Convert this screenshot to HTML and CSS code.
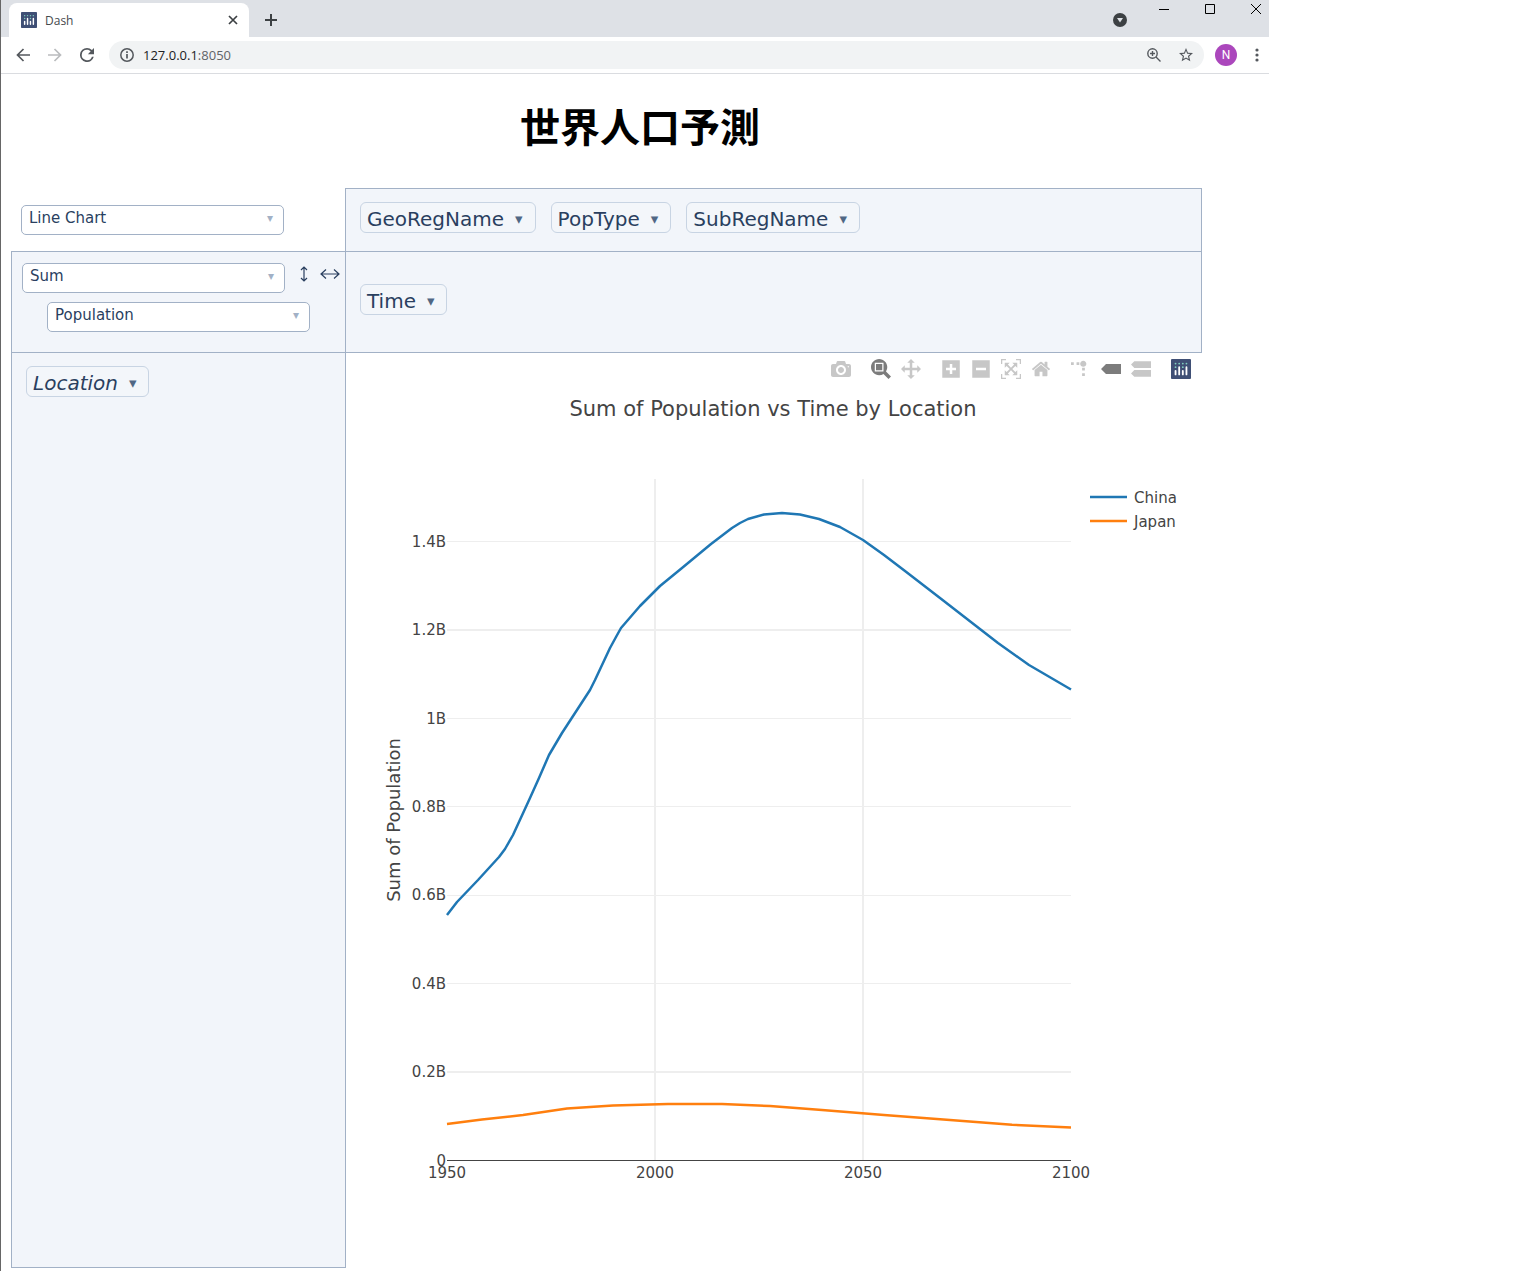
FILE: index.html
```html
<!DOCTYPE html>
<html lang="ja">
<head>
<meta charset="utf-8">
<title>Dash</title>
<link rel="stylesheet" href="styles.css">
</head>
<body>
<div class="browser">
  <header class="tabstrip">
    <div class="tab">
      <svg class="tab-logo" viewBox="0 0 132 132" aria-hidden="true"><use href="#plotly-logo"/></svg>
      <span class="tab-title">Dash</span>
      <button class="icon-btn" aria-label="Close tab"><svg width="10" height="10" viewBox="0 0 10 10"><path d="M1 1l8 8M9 1l-8 8" stroke="#3c4043" stroke-width="1.700"/></svg></button>
    </div>
    <button class="icon-btn new-tab" aria-label="New tab"><svg width="12" height="12" viewBox="0 0 12 12"><path d="M6 0v12M0 6h12" stroke="#3c4043" stroke-width="2"/></svg></button>
    <button class="icon-btn tab-search" aria-label="Search tabs"><svg width="14" height="14" viewBox="0 0 14 14"><circle cx="7" cy="7" r="7" fill="#3c4043"/><path d="M4 5h6L7 9.500z" fill="#dee1e6"/></svg></button>
    <div class="window-controls">
      <button class="icon-btn" aria-label="Minimize"><svg width="10" height="10" viewBox="0 0 10 10"><path d="M0 5.500h10" stroke="#000"/></svg></button>
      <button class="icon-btn" aria-label="Maximize"><svg width="10" height="10" viewBox="0 0 10 10"><path d="M.5.5h9v9h-9z" fill="none" stroke="#000"/></svg></button>
      <button class="icon-btn" aria-label="Close"><svg width="10" height="10" viewBox="0 0 10 10"><path d="M0 0l10 10M10 0L0 10" stroke="#000"/></svg></button>
    </div>
  </header>
  <div class="toolbar">
    <button class="icon-btn" aria-label="Back"><svg width="14" height="14" viewBox="0 0 14 14"><path d="M14 7H1.500M7.500 1L1.500 7l6 6" fill="none" stroke="#54585d" stroke-width="1.700"/></svg></button>
    <button class="icon-btn" aria-label="Forward"><svg width="14" height="14" viewBox="0 0 14 14"><path d="M0 7h12.500M6.500 1l6 6-6 6" fill="none" stroke="#babcbe" stroke-width="1.700"/></svg></button>
    <button class="icon-btn" aria-label="Reload"><svg width="14" height="14" viewBox="4 4 16 16"><path fill="#54585d" d="M17.650 6.350A7.960 7.960 0 0 0 12 4a8 8 0 1 0 7.730 10h-2.080A6 6 0 1 1 12 6c1.660 0 3.140.69 4.220 1.780L13 11h7V4z"/></svg></button>
    <div class="address">
      <svg width="14" height="14" viewBox="0 0 14 14" aria-hidden="true"><circle cx="7" cy="7" r="6.200" fill="none" stroke="#54585d" stroke-width="1.500"/><path d="M7 6v4.500M7 3.300v1.700" stroke="#54585d" stroke-width="1.700"/></svg>
      <span class="url">127.0.0.1<span class="port">:8050</span></span>
      <button class="icon-btn" aria-label="Zoom"><svg width="14" height="14" viewBox="0 0 14 14"><circle cx="5.500" cy="5.500" r="4.700" fill="none" stroke="#54585d" stroke-width="1.400"/><path d="M9 9l4.500 4.500M5.500 3v5M3 5.500h5" stroke="#54585d" stroke-width="1.400"/></svg></button>
      <button class="icon-btn" aria-label="Bookmark"><svg width="14" height="14" viewBox="2 2 20 20"><path fill="#54585d" d="M22 9.240l-7.190-.62L12 2 9.190 8.630 2 9.240l5.460 4.730L5.820 21 12 17.270 18.180 21l-1.630-7.030zM12 15.400l-3.760 2.270 1-4.280-3.320-2.880 4.380-.38L12 6.100l1.710 4.040 4.380.38-3.320 2.880 1 4.280z"/></svg></button>
    </div>
    <button class="avatar" aria-label="Profile N">N</button>
    <button class="icon-btn" aria-label="Menu"><svg width="4" height="14" viewBox="0 0 4 14"><g fill="#54585d"><circle cx="2" cy="2" r="1.600"/><circle cx="2" cy="7" r="1.600"/><circle cx="2" cy="12" r="1.600"/></g></svg></button>
  </div>

  <main class="page">
    <h1 class="title">世界人口予測</h1>
    <div class="pivot">
      <div class="cell-renderer">
        <label class="dropdown"><select aria-label="Renderer"><option>Line Chart</option></select><span class="caret">▾</span></label>
      </div>
      <div class="cell cell-right attrs-unused">
        <button class="attr">GeoRegName<span class="attr-caret">▾</span></button>
        <button class="attr">PopType<span class="attr-caret">▾</span></button>
        <button class="attr">SubRegName<span class="attr-caret">▾</span></button>
      </div>
      <div class="cell cell-vals">
        <div class="vals-row">
          <label class="dropdown"><select aria-label="Aggregator"><option>Sum</option></select><span class="caret">▾</span></label>
          <button class="icon-btn" aria-label="Row order"><svg width="8" height="16" viewBox="0 0 8 16"><path d="M4 1.500v13M1 4l3-3 3 3M1 12l3 3 3-3" fill="none" stroke="#2a3f5f" stroke-width="1.200"/></svg></button>
          <button class="icon-btn" aria-label="Column order"><svg width="20" height="12" viewBox="0 0 20 12"><path d="M1.500 6h17M6 1.500L1 6l5 4.500M14 1.500L19 6l-5 4.500" fill="none" stroke="#2a3f5f" stroke-width="1.200"/></svg></button>
        </div>
        <label class="dropdown vals-attr"><select aria-label="Value"><option>Population</option></select><span class="caret">▾</span></label>
      </div>
      <div class="cell cell-right attrs-cols">
        <button class="attr">Time<span class="attr-caret">▾</span></button>
      </div>
      <div class="cell attrs-rows">
        <button class="attr attr-filtered">Location<span class="attr-caret">▾</span></button>
      </div>
      <div class="output">
        <div class="modebar">
          <div class="mode-group">
            <button aria-label="Download plot as a png"><svg viewBox="0 0 1000 1000"><path transform="matrix(1 0 0 -1 0 850)" d="m500 450c-83 0-150-67-150-150 0-83 67-150 150-150 83 0 150 67 150 150 0 83-67 150-150 150z m400 150h-120c-16 0-34 13-39 29l-31 93c-6 15-23 28-40 28h-340c-16 0-34-13-39-28l-31-94c-6-15-23-28-40-28h-120c-55 0-100-45-100-100v-450c0-55 45-100 100-100h800c55 0 100 45 100 100v450c0 55-45 100-100 100z m-400-550c-138 0-250 112-250 250 0 138 112 250 250 250 138 0 250-112 250-250 0-138-112-250-250-250z m365 380c-19 0-35 16-35 35 0 19 16 35 35 35 19 0 35-16 35-35 0-19-16-35-35-35z"/></svg></button>
          </div>
          <div class="mode-group">
            <button class="active" aria-label="Zoom"><svg viewBox="0 0 1000 1000"><path transform="matrix(1 0 0 -1 0 850)" d="m1000-25l-250 251c40 63 63 138 63 218 0 224-182 406-407 406-224 0-406-182-406-406s183-406 407-406c80 0 155 22 218 62l250-250 125 125z m-812 250l0 438 437 0 0-438-437 0z m62 375l313 0 0-312-313 0 0 312z"/></svg></button>
            <button aria-label="Pan"><svg viewBox="0 0 1000 1000"><path transform="matrix(1 0 0 -1 0 850)" d="m1000 350l-187 188 0-125-250 0 0 250 125 0-188 187-187-187 125 0 0-250-250 0 0 125-188-188 186-187 0 125 252 0 0-250-125 0 187-188 188 188-125 0 0 250 250 0 0-126 187 188z"/></svg></button>
          </div>
          <div class="mode-group">
            <button aria-label="Zoom in"><svg viewBox="0 0 875 1000"><path transform="matrix(1 0 0 -1 0 850)" d="m1 787l0-875 875 0 0 875-875 0z m687-500l-187 0 0-187-125 0 0 187-188 0 0 125 188 0 0 187 125 0 0-187 187 0 0-125z"/></svg></button>
            <button aria-label="Zoom out"><svg viewBox="0 0 875 1000"><path transform="matrix(1 0 0 -1 0 850)" d="m0 788l0-876 875 0 0 876-875 0z m688-500l-500 0 0 125 500 0 0-125z"/></svg></button>
            <button aria-label="Autoscale"><svg viewBox="0 0 1000 1000"><path transform="matrix(1 0 0 -1 0 850)" d="m250 850l-187 0-63 0 0-62 0-188 63 0 0 188 187 0 0 62z m688 0l-188 0 0-62 188 0 0-188 62 0 0 188 0 62-62 0z m-875-938l0 188-63 0 0-188 0-62 63 0 187 0 0 62-187 0z m875 188l0-188-188 0 0-62 188 0 62 0 0 62 0 188-62 0z m-125 188l-1 0-93-94-156 156 156 156 92-93 2 0 0 250-250 0 0-2 93-92-156-156-156 156 94 92 0 2-250 0 0-250 0 0 93 93 157-156-157-156-93 94 0 0 0-250 250 0 0 0-94 93 156 157 156-157-93-93 0 0 250 0 0 250z"/></svg></button>
            <button aria-label="Reset axes"><svg viewBox="0 0 928.6 1000"><path transform="matrix(1 0 0 -1 0 850)" d="m786 296v-267q0-15-11-26t-25-10h-214v214h-143v-214h-214q-15 0-25 10t-11 26v267q0 1 0 2t0 2l321 264 321-264q1-1 1-4z m124 39l-34-41q-5-5-12-6h-2q-7 0-12 3l-386 322-386-322q-7-4-13-4-7 2-12 7l-35 41q-4 5-3 13t6 12l401 334q18 15 42 15t43-15l136-114v109q0 8 5 13t13 5h107q8 0 13-5t5-13v-227l122-102q5-5 6-12t-4-13z"/></svg></button>
          </div>
          <div class="mode-group">
            <button aria-label="Toggle spike lines"><svg viewBox="0 0 1000 1000"><path transform="matrix(1.5 0 0 -1.5 0 850)" d="M512 409c0-57-46-104-103-104-57 0-104 47-104 104 0 57 47 103 104 103 57 0 103-46 103-103z m-327-39l92 0 0 92-92 0z m-185 0l92 0 0 92-92 0z m370-186l92 0 0 93-92 0z m0-184l92 0 0 92-92 0z"/></svg></button>
            <button class="active" aria-label="Show closest data on hover"><svg viewBox="0 0 1500 1000"><path transform="matrix(1 0 0 -1 0 850)" d="m375 725l0 0-375-375 375-374 0-1 1125 0 0 750-1125 0z"/></svg></button>
            <button aria-label="Compare data on hover"><svg viewBox="0 0 1125 1000"><path transform="matrix(1 0 0 -1 0 850)" d="m187 786l0 2-187-188 188-187 0 0 937 0 0 373-938 0z m0-499l0 1-187-188 188-188 0 0 937 0 0 376-938-1z"/></svg></button>
          </div>
          <div class="mode-group">
            <a href="#" aria-label="Produced with Plotly"><svg viewBox="0 0 132 132">
              <g id="plotly-logo">
                <rect width="132" height="132" rx="6" fill="#3f4f75"/>
                <g fill="#80cfbe"><circle cx="30" cy="30" r="6"/><circle cx="54" cy="30" r="6"/><circle cx="78" cy="30" r="6"/><circle cx="102" cy="30" r="6"/><circle cx="30" cy="54" r="6"/><circle cx="78" cy="54" r="6"/></g>
                <path d="M30 78v24M78 78v24M54 54v48M102 54v48" stroke="#fff" stroke-width="12" stroke-linecap="round"/>
              </g>
            </svg></a>
          </div>
        </div>
        <svg class="chart" viewBox="0 0 856 883" role="img" aria-label="Sum of Population vs Time by Location">
          <text class="chart-title" x="427" y="31" text-anchor="middle">Sum of Population vs Time by Location</text>
          <g transform="translate(101 94)">
            <path class="grid-thick" d="M208 0v681M416 0v681M0 151h624M0 593h624"/>
            <path class="grid-thin" d="M0 62.500h624M0 239.500h624M0 327.500h624M0 416.500h624M0 504.500h624"/>
            <path class="zero" d="M0 681.500h624"/>
            <polyline class="line china" points="0,436 10,423 31,401 52,378 58,370 66,356 83,319 92,299 102,276 115,254 143,211 148,201 163,169 169,158 174,149 193,127 213,107 235,89 264,65 285,49 293,44 301,40 317,35.500 335,34 353,35.500 372,40 393,48 416,61 437,76 458,92 493,119 551,164 582,186 624,210.500"/>
            <polyline class="line japan" points="0,645 35,640.500 76,636 120,629.500 166,626.500 221,625 275,625 323,627 375,631 437,636 503,641 565,645.800 624,648.500"/>
            <g class="tick" text-anchor="end">
              <text x="-1" y="68">1.4B</text>
              <text x="-1" y="156">1.2B</text>
              <text x="-1" y="245">1B</text>
              <text x="-1" y="333">0.8B</text>
              <text x="-1" y="421">0.6B</text>
              <text x="-1" y="510">0.4B</text>
              <text x="-1" y="598">0.2B</text>
              <text x="-1" y="687">0</text>
            </g>
            <g class="tick" text-anchor="middle">
              <text x="0" y="699">1950</text>
              <text x="208" y="699">2000</text>
              <text x="416" y="699">2050</text>
              <text x="624" y="699">2100</text>
            </g>
            <text class="axis-title" transform="translate(-47 341) rotate(-90)" text-anchor="middle">Sum of Population</text>
            <g class="tick">
              <path class="line china" d="M643 18h37"/>
              <path class="line japan" d="M643 42h37"/>
              <text x="687" y="24">China</text>
              <text x="687" y="48">Japan</text>
            </g>
          </g>
        </svg>
      </div>
    </div>
  </main>
</div>
</body>
</html>
```

FILE: styles.css
```css
* { box-sizing: border-box; }

body {
  margin: 0;
  background: #fff;
  color: #2a3f5f;
  font-family: "DejaVu Sans", Verdana, sans-serif;
}

button, select { font: inherit; color: inherit; }
svg { display: block; }

.browser {
  max-width: 1269px;
  border-left: 1px solid #666;
}

.icon-btn {
  display: flex;
  align-items: center;
  justify-content: center;
  padding: 0;
  border: 0;
  background: none;
}

/* Tab strip */
.tabstrip {
  display: flex;
  align-items: center;
  height: 37px;
  padding-left: 8px;
  background: #dee1e6;
  font: 12px "Open Sans", "Noto Sans", sans-serif;
}
.tab {
  display: flex;
  align-items: center;
  align-self: flex-end;
  gap: 8px;
  width: 240px;
  height: 34px;
  padding: 0 11px 0 12px;
  border-radius: 8px 8px 0 0;
  background: #fff;
  color: #45494d;
}
.tab-logo { width: 16px; height: 16px; }
.tab-title { flex: 1; }
.new-tab { margin: 3px auto 0 16px; }
.tab-search { margin: 3px 32px 0 0; }
.window-controls {
  display: flex;
  align-self: flex-start;
  gap: 36px;
  padding: 4px 8px 0 0;
}

/* Toolbar */
.toolbar {
  display: flex;
  align-items: center;
  gap: 18px;
  height: 37px;
  padding: 0 10px 0 15px;
  border-bottom: 1px solid #dadce0;
}
.address {
  display: flex;
  flex: 1;
  align-items: center;
  gap: 18px;
  height: 28px;
  margin: 0 -7px 0 -3px;
  padding: 0 11px;
  border-radius: 14px;
  background: #f1f3f4;
}
.url {
  flex: 1;
  margin-left: -9px;
  color: #202124;
  font: 13px "Open Sans", "Noto Sans", sans-serif;
}
.port { color: #5f6368; }
.avatar {
  width: 22px;
  height: 22px;
  padding: 0;
  border: 0;
  border-radius: 50%;
  background: #ab47bc;
  color: #fff;
  font: 12px Roboto, sans-serif;
}

/* Page */
.page { padding: 22px 67px 3px 10px; }
.title {
  margin: 0 0 34px 67px;
  color: #000;
  font: bold 40px/58px "Noto Sans CJK JP", sans-serif;
  text-align: center;
}

.pivot {
  display: grid;
  grid-template-columns: 334px 1fr;
  grid-template-rows: 63px 101px auto;
}
.cell {
  border: 1px solid #a2b1c6;
  border-width: 1px 0 0 1px;
  background: #f2f5fa;
}
.cell-right { border-right-width: 1px; }
.cell-renderer { padding: 17px 10px; }
.cell-vals { padding: 11px 0 0 10px; }
.attrs-unused, .attrs-cols {
  display: flex;
  align-items: flex-start;
  gap: 15px;
  padding: 13px 14px;
}
.attrs-cols { align-items: center; padding: 0 14px 5px; }
.attrs-rows { padding: 13px 14px; border-bottom-width: 1px; }
.output {
  border: 1px solid #a2b1c6;
  border-width: 1px 0 0 1px;
}

.vals-row { display: flex; align-items: flex-start; }
.vals-row .icon-btn { width: 26px; height: 22px; margin-left: 6px; }
.vals-row .icon-btn + .icon-btn { margin-left: 0; }
.vals-attr { margin: 9px 0 0 25px; }

.dropdown {
  display: grid;
  width: 263px;
  height: 30px;
  font-size: 15px;
}
.dropdown select, .caret { grid-area: 1 / 1; }
.dropdown select {
  width: 100%;
  height: 30px;
  padding: 0 7px 4px;
  border: 1px solid #a2b1c6;
  border-radius: 5px;
  background: #fff;
  appearance: none;
}
.caret {
  justify-self: end;
  padding: 5px 11px 0 0;
  color: #a2b1c6;
  font-size: 12px;
  line-height: 16px;
  pointer-events: none;
}

.attr {
  display: inline-flex;
  align-items: center;
  gap: 11px;
  height: 31px;
  padding: 2px 12px 0 6px;
  border: 1px solid #c8d4e3;
  border-radius: 6px;
  background: #f3f6fa;
  font-size: 20px;
}
.attr-caret { color: #506784; font-size: 15px; font-style: normal; }
.attr-filtered { font-style: italic; }

/* Chart */
.modebar {
  display: flex;
  justify-content: flex-end;
  gap: 10px;
  padding: 6px 6px 6px 0;
}
.mode-group { display: flex; }
.mode-group button, .mode-group a {
  display: flex;
  justify-content: center;
  width: 30px;
  padding: 0;
  border: 0;
  background: none;
}
.mode-group svg { width: 20px; height: 20px; fill: #c7c7c7; }
.mode-group .active svg { fill: #7c7c7c; }

.chart { width: 100%; height: auto; }
.chart text { fill: #444; }
.chart-title { font-size: 21px; }
.tick { font-size: 15px; }
.axis-title { font-size: 18px; }
.grid-thick { stroke: #eee; stroke-width: 2; }
.grid-thin { stroke: #eee; stroke-width: 1; }
.zero { stroke: #444; stroke-width: 1; }
.line { fill: none; stroke-width: 2.500; stroke-linejoin: round; }
.china { stroke: #1f77b4; }
.japan { stroke: #ff7f0e; }
```
